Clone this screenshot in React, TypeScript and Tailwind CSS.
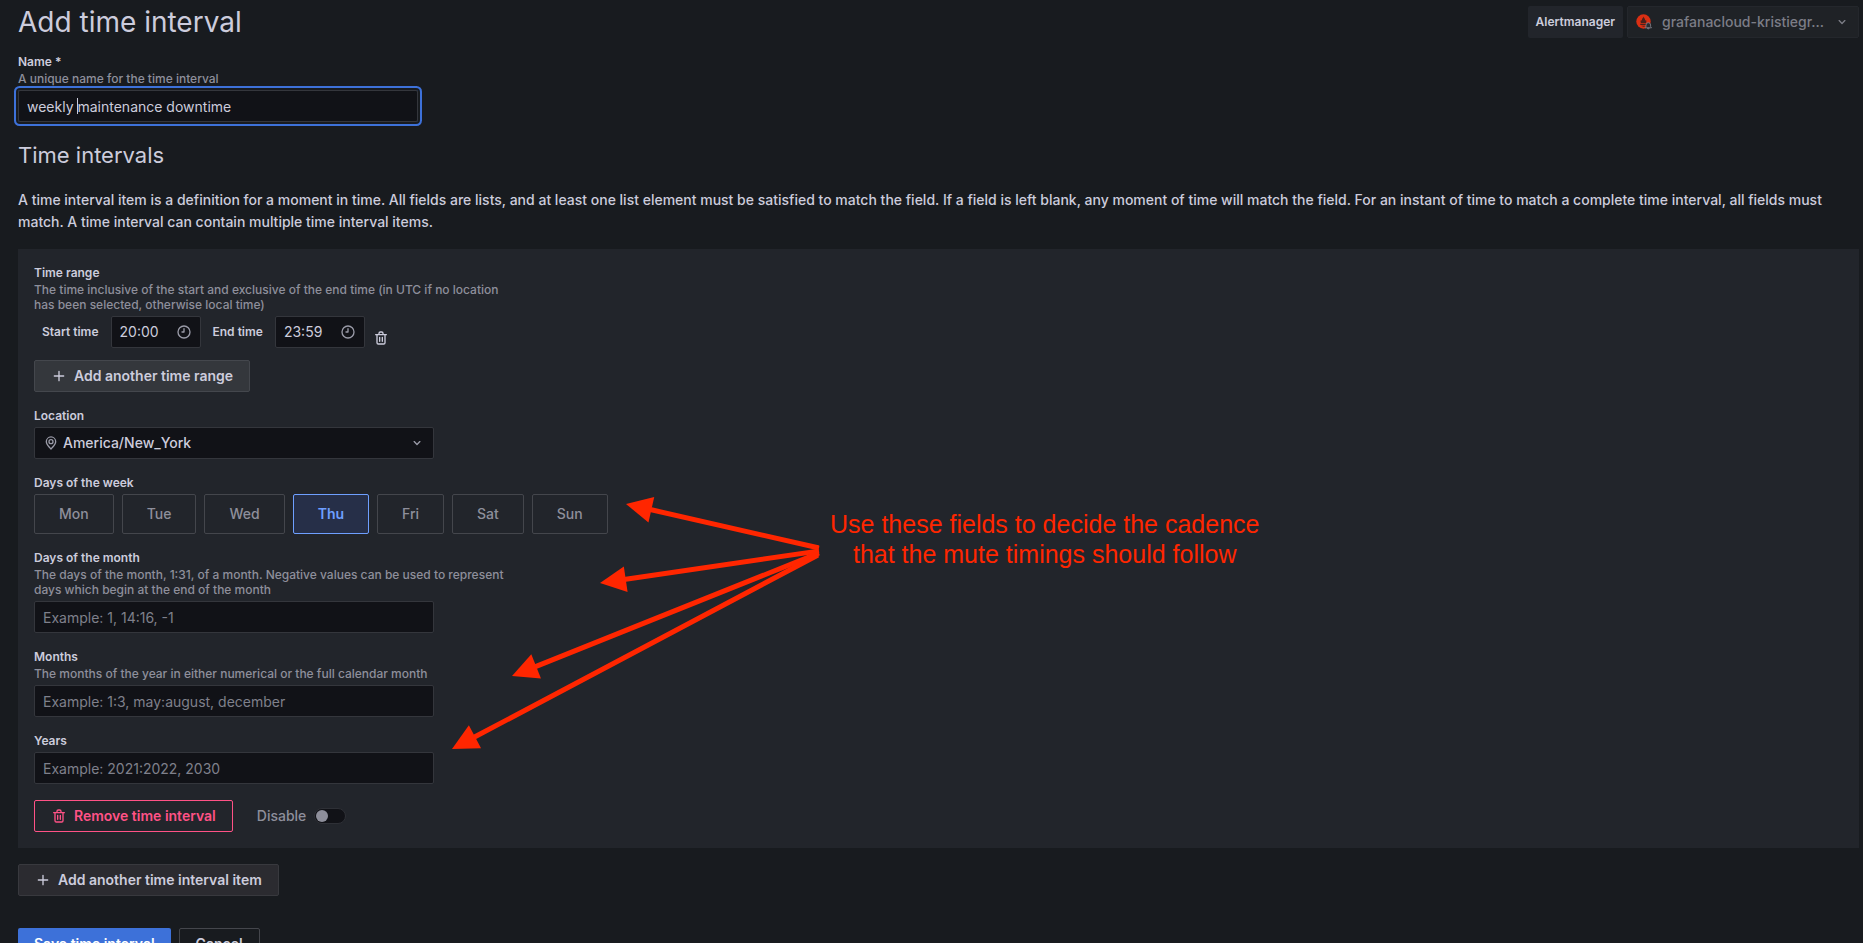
import { useState, type ReactNode } from 'react'

const days = ['Mon', 'Tue', 'Wed', 'Thu', 'Fri', 'Sat', 'Sun']

// every arrow of the note starts beside the text and ends at one field
const arrows = [
  { from: [819, 548], to: [626, 504] },
  { from: [819, 551], to: [600, 583] },
  { from: [819, 553], to: [512, 676] },
  { from: [818, 555], to: [452, 749] },
]

const inputClass =
  'block h-8 w-[400px] rounded-[2px] border border-[#34363c] bg-[#111217] px-2 text-sm text-[#ccccdc] outline-none placeholder:text-[#7f808b]'

const secondaryButton =
  'flex h-8 items-center gap-[7px] rounded-[2px] border px-4 text-sm font-semibold text-[#ccccdc]'

function PlusIcon() {
  return (
    <svg viewBox="0 0 24 24" className="size-4" fill="currentColor">
      <path d="M19 11h-6V5a1 1 0 0 0-2 0v6H5a1 1 0 0 0 0 2h6v6a1 1 0 0 0 2 0v-6h6a1 1 0 0 0 0-2Z" />
    </svg>
  )
}

function TrashIcon() {
  return (
    <svg viewBox="0 0 24 24" className="size-4" fill="currentColor">
      <path d="M10 18a1 1 0 0 0 1-1v-6a1 1 0 0 0-2 0v6a1 1 0 0 0 1 1ZM20 6h-4V5a3 3 0 0 0-3-3h-2a3 3 0 0 0-3 3v1H4a1 1 0 0 0 0 2h1v11a3 3 0 0 0 3 3h8a3 3 0 0 0 3-3V8h1a1 1 0 0 0 0-2ZM10 5a1 1 0 0 1 1-1h2a1 1 0 0 1 1 1v1h-4Zm7 14a1 1 0 0 1-1 1H8a1 1 0 0 1-1-1V8h10Zm-3-1a1 1 0 0 0 1-1v-6a1 1 0 0 0-2 0v6a1 1 0 0 0 1 1Z" />
    </svg>
  )
}

function ChevronIcon() {
  return (
    <svg viewBox="0 0 24 24" className="size-4" fill="currentColor">
      <path d="M17 9.17a1 1 0 0 0-1.41 0L12 12.71 8.46 9.17a1 1 0 0 0-1.41 1.42l4.24 4.24a1 1 0 0 0 1.42 0L17 10.59a1 1 0 0 0 0-1.42Z" />
    </svg>
  )
}

function ClockIcon() {
  return (
    <svg viewBox="0 0 24 24" className="size-4" fill="currentColor">
      <path d="M12 2a10 10 0 1 0 10 10A10 10 0 0 0 12 2Zm0 18a8 8 0 1 1 8-8 8 8 0 0 1-8 8Zm0-14a1 1 0 0 0-1 1v4H9a1 1 0 0 0 0 2h3a1 1 0 0 0 1-1V7a1 1 0 0 0-1-1Z" />
    </svg>
  )
}

function PinIcon() {
  return (
    <svg viewBox="0 0 24 24" className="size-4" fill="currentColor">
      <path d="M12 2a8 8 0 0 0-8 7.92c0 5.48 7.05 11.58 7.35 11.84a1 1 0 0 0 1.3 0C13 21.5 20 15.4 20 9.92A8 8 0 0 0 12 2Zm0 17.65c-1.67-1.59-6-6-6-9.73a6 6 0 0 1 12 0c0 3.7-4.33 8.14-6 9.73ZM12 6a4 4 0 1 0 4 4 4 4 0 0 0-4-4Zm0 6a2 2 0 1 1 2-2 2 2 0 0 1-2 2Z" />
    </svg>
  )
}

function AlertmanagerLogo() {
  return (
    <svg viewBox="0 0 16 16" className="size-4">
      <circle cx="7.5" cy="7.5" r="7.2" fill="#da2f13" />
      <path
        d="M7.5 2.6c.3 1.5 1.6 2 1.6 3.3 0 .8.8.6.9.2.6 1 .5 2.100 0 2.900H5c-.6-.9-.6-1.900 0-2.900.1.400.9.600.9-.2 0-1.300 1.300-1.800 1.600-3.300Z"
        fill="#4a211b"
      />
      <path d="M4.300 9.800h6.400v1.200H4.300zM5.500 11.800h4c-.3 1.200-3.700 1.200-4 0Z" fill="#4a211b" />
      <path
        d="M12.300 8.700a2.300 2.300 0 0 0-2.300 2.300v1.500l-.9 1.300h6.400l-.9-1.300V11a2.300 2.300 0 0 0-2.300-2.300Zm-1 5.300h2c-.2 1.200-1.800 1.200-2 0Z"
        fill="#2a2c31"
        stroke="#7c7d86"
        strokeWidth="0.9"
      />
    </svg>
  )
}

interface FieldProps {
  label: string
  htmlFor?: string
  description?: string
  children: ReactNode
}

function Field({ label, htmlFor, description, children }: FieldProps) {
  const labelClass = 'block font-semibold text-[#ccccdc]'
  return (
    <div role={htmlFor ? undefined : 'group'} aria-label={htmlFor ? undefined : label} className="mb-4">
      <div className="mb-1 max-w-[480px] text-xs leading-[15px]">
        {htmlFor ? (
          <label htmlFor={htmlFor} className={labelClass}>
            {label}
          </label>
        ) : (
          <span className={labelClass}>{label}</span>
        )}
        {description && <p className="pt-[2px] font-medium text-[#8e8f9b]">{description}</p>}
      </div>
      {children}
    </div>
  )
}

function TimeInput({ id, label, value }: { id: string; label: string; value: string }) {
  return (
    <div className="flex items-center">
      <label htmlFor={id} className="px-2 text-xs font-semibold text-[#ccccdc]">
        {label}
      </label>
      <div className="ml-1 flex h-8 w-[90px] items-center rounded-[2px] border border-[#34363c] bg-[#111217] px-2 text-[#9a9ba8]">
        <input
          id={id}
          defaultValue={value}
          className="min-w-0 flex-1 bg-transparent text-sm text-[#ccccdc] outline-none"
        />
        <ClockIcon />
      </div>
    </div>
  )
}

function Annotation() {
  return (
    <>
      <svg className="pointer-events-none absolute top-0 left-0 h-full w-full" fill="#ff2600">
        {arrows.map(({ from, to }) => {
          const angle = (Math.atan2(from[1] - to[1], from[0] - to[0]) * 180) / Math.PI
          const length = Math.hypot(from[0] - to[0], from[1] - to[1])
          return (
            <g key={to[0]} transform={`translate(${to[0]} ${to[1]}) rotate(${angle})`}>
              <path d="M0 0 26-13V13Z" />
              <rect x="25" y="-2.5" width={length - 25} height="5" rx="1" />
            </g>
          )
        })}
      </svg>
      <p className="absolute top-[509px] left-[830px] text-center font-['Liberation_Sans',sans-serif] text-[25px] leading-[30px] whitespace-nowrap text-[#ff2600]">
        Use these fields to decide the cadence
        <br />
        that the mute timings should follow
      </p>
    </>
  )
}

export default function App() {
  const [selected, setSelected] = useState('Thu')

  return (
    <div className="relative h-screen overflow-hidden bg-[#181b1f] pr-1 pl-[18px] font-['Inter',sans-serif] text-sm text-[#ccccdc]">
      <header className="flex items-start justify-between">
        <h1 className="pt-1 text-[28px] leading-9 font-normal">Add time interval</h1>
        <div className="flex gap-1 pt-[6px]">
          <label
            htmlFor="alertmanager"
            className="flex h-8 items-center rounded-[2px] bg-[#22252b] px-2 text-xs font-semibold"
          >
            Alertmanager
          </label>
          <div className="flex h-8 w-[232px] items-center rounded-[2px] border border-[#24272c] bg-[#1f2226] px-2 text-[#7c7d86]">
            <AlertmanagerLogo />
            <select
              id="alertmanager"
              disabled
              className="ml-[10px] min-w-0 flex-1 appearance-none bg-transparent font-medium opacity-100"
            >
              <option>grafanacloud-kristiegr...</option>
            </select>
            <ChevronIcon />
          </div>
        </div>
      </header>

      <form>
        <div className="pt-[14px]">
          <Field label="Name *" htmlFor="name" description="A unique name for the time interval">
            <div className="relative w-[400px] rounded-[2px] ring-2 ring-[#3d71d9] ring-offset-2 ring-offset-[#181b1f]">
              <input id="name" defaultValue="weekly maintenance downtime" className={inputClass} />
              <span className="absolute top-2 left-[59px] h-4 w-px bg-[#ccccdc]" />
            </div>
          </Field>
        </div>

        <h2 className="pt-1 text-[22px] leading-[26px]">Time intervals</h2>
        <p className="mt-[21px] pr-4 leading-[22px] font-medium">
          A time interval item is a definition for a moment in time. All fields are lists, and at least one list
          element must be satisfied to match the field. If a field is left blank, any moment of time will match the
          field. For an instant of time to match a complete time interval, all fields must match. A time interval can
          contain multiple time interval items.
        </p>

        <section className="mt-4 bg-[#22252b] p-4">
          <Field
            label="Time range"
            description="The time inclusive of the start and exclusive of the end time (in UTC if no location has been selected, otherwise local time)"
          >
            <div className="flex items-center gap-1">
              <TimeInput id="start" label="Start time" value="20:00" />
              <TimeInput id="end" label="End time" value="23:59" />
              <button type="button" aria-label="Remove time range" className="mt-3 ml-1">
                <TrashIcon />
              </button>
            </div>
            <button type="button" className={`${secondaryButton} mt-3 border-[#44474d] bg-[#34373c]`}>
              <PlusIcon />
              Add another time range
            </button>
          </Field>

          <Field label="Location" htmlFor="location">
            <div className="flex h-8 w-[400px] items-center gap-1 rounded-[2px] border border-[#34363c] bg-[#111217] px-2 text-[#9a9ba8]">
              <PinIcon />
              <select
                id="location"
                className="min-w-0 flex-1 appearance-none bg-transparent font-medium text-[#ccccdc] outline-none"
              >
                <option>America/New_York</option>
              </select>
              <ChevronIcon />
            </div>
          </Field>

          <Field label="Days of the week">
            <div className="flex gap-2">
              {days.map((day) => (
                <button
                  key={day}
                  type="button"
                  aria-pressed={day === selected}
                  onClick={() => setSelected(day)}
                  className={`h-10 rounded-[2px] border px-6 ${
                    day === selected
                      ? 'border-[#6e9fff] bg-[#262f48] font-semibold text-[#6e9fff]'
                      : 'border-[#44464c] font-medium text-[#8e8f9b]'
                  }`}
                >
                  {day}
                </button>
              ))}
            </div>
          </Field>

          <Field
            label="Days of the month"
            htmlFor="month-days"
            description="The days of the month, 1:31, of a month. Negative values can be used to represent days which begin at the end of the month"
          >
            <input id="month-days" placeholder="Example: 1, 14:16, -1" className={inputClass} />
          </Field>

          <Field
            label="Months"
            htmlFor="months"
            description="The months of the year in either numerical or the full calendar month"
          >
            <input id="months" placeholder="Example: 1:3, may:august, december" className={inputClass} />
          </Field>

          <Field label="Years" htmlFor="years">
            <input id="years" placeholder="Example: 2021:2022, 2030" className={inputClass} />
          </Field>

          <div className="flex items-center gap-6">
            <button
              type="button"
              className="flex h-8 items-center gap-[7px] rounded-[2px] border border-[#ff5286] px-4 font-semibold text-[#ff5286]"
            >
              <TrashIcon />
              Remove time interval
            </button>
            <label className="flex items-center gap-2 font-medium text-[#8e8f9b]">
              Disable
              <input type="checkbox" role="switch" className="peer sr-only" />
              <span className="flex h-4 w-8 items-center rounded-full border border-[#2e3036] bg-[#111217] px-px peer-checked:justify-end">
                <span className="size-3 rounded-full bg-[#8e8f9b]" />
              </span>
            </label>
          </div>
        </section>

        <button type="button" className={`${secondaryButton} mt-4 border-[#38393e] bg-[#2b2b30]`}>
          <PlusIcon />
          Add another time interval item
        </button>

        <div className="mt-8 flex gap-2">
          <button type="submit" className="h-8 rounded-[2px] bg-[#3d71d9] px-4 font-semibold text-white">
            Save time interval
          </button>
          <button type="button" className="h-8 rounded-[2px] border border-[#44464c] px-4 font-semibold">
            Cancel
          </button>
        </div>
      </form>

      <Annotation />
    </div>
  )
}
